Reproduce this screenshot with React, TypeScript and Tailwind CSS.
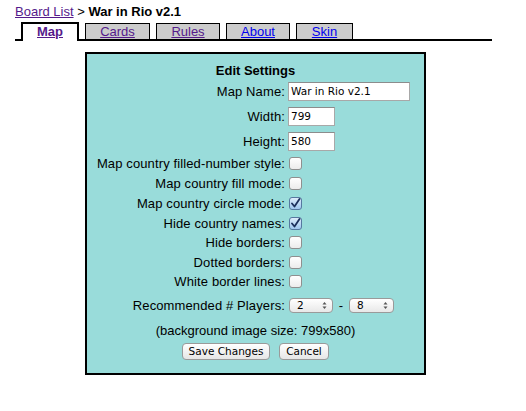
import React from "react";

type CheckRow = { label: string; checked: boolean; h: string };

const checkRows: CheckRow[] = [
  { label: "Map country filled-number style:", checked: false, h: "h-[19px]" },
  { label: "Map country fill mode:", checked: false, h: "h-[20px]" },
  { label: "Map country circle mode:", checked: true, h: "h-[20px]" },
  { label: "Hide country names:", checked: true, h: "h-[20px]" },
  { label: "Hide borders:", checked: false, h: "h-[19px]" },
  { label: "Dotted borders:", checked: false, h: "h-[20px]" },
  { label: "White border lines:", checked: false, h: "h-[19px]" },
];

function Checkbox({ checked }: { checked: boolean }) {
  if (checked) {
    return (
      <span className="ml-[1px] flex h-[13px] w-[13px] items-center justify-center rounded-[3px] border border-[#56789f] bg-gradient-to-b from-[#dcebfa] to-[#9fc6ee]">
        <svg width="11" height="11" viewBox="0 0 11 11">
          <path d="M2 5.5 L4.5 8.5 L9.5 1" fill="none" stroke="#1c2f5c" strokeWidth="1.8" strokeLinecap="round" strokeLinejoin="round" />
        </svg>
      </span>
    );
  }
  return (
    <span className="ml-[1px] block h-[13px] w-[13px] rounded-[3px] border border-[#8f8f8f] bg-gradient-to-b from-white to-[#ececec]" />
  );
}

function Select({ value, w }: { value: string; w: string }) {
  return (
    <span
      className={`flex h-[15px] ${w} items-center justify-between rounded-[4px] border border-[#9a9a9a] bg-gradient-to-b from-white to-[#e8e8e8] pl-[7px] pr-[5px] font-['DejaVu_Sans'] text-[10.5px] leading-none`}
    >
      <span>{value}</span>
      <svg width="5" height="9" viewBox="0 0 5 9">
        <path d="M0.5 3.5 L2.5 1 L4.5 3.5 Z" fill="#555" />
        <path d="M0.5 5.5 L2.5 8 L4.5 5.5 Z" fill="#555" />
      </svg>
    </span>
  );
}

function Button({ children, w }: { children: React.ReactNode; w: string }) {
  return (
    <button
      className={`flex h-[17px] ${w} items-center justify-center rounded-[4px] border border-[#9a9a9a] bg-gradient-to-b from-white to-[#e6e6e6] font-['DejaVu_Sans'] text-[10.5px] leading-none text-black`}
    >
      {children}
    </button>
  );
}

export default function App() {
  const tabs = [
    { label: "Cards", w: "w-[65px]", color: "text-[#551a8b]" },
    { label: "Rules", w: "w-[64px]", color: "text-[#551a8b]" },
    { label: "About", w: "w-[64px]", color: "text-[#0000ee]" },
    { label: "Skin", w: "w-[57px]", color: "text-[#0000ee]" },
  ];

  return (
    <div className="h-[411px] w-[526px] bg-white font-['Liberation_Sans',Arial,sans-serif] text-[13px] leading-[15px] text-black">
      {/* breadcrumb */}
      <div className="pl-[15px] pt-[4px]">
        <a href="#" className="text-[#551a8b] underline">
          Board List
        </a>{" "}
        &gt; <b>War in Rio v2.1</b>
      </div>

      {/* tabs */}
      <div className="ml-[15px] mt-[1px] flex h-[21px] w-[477px] items-end gap-[6px] border-b-2 border-black pl-[6px]">
        <div className="-mb-[2px] flex h-[19px] w-[58px] items-start justify-center border-x-2 border-t-2 border-black bg-white">
          <a href="#" className="font-bold text-[#551a8b] underline">
            Map
          </a>
        </div>
        {tabs.map((t) => (
          <div
            key={t.label}
            className={`flex h-[16px] ${t.w} items-start justify-center border-x border-t border-black bg-[#cccccc]`}
          >
            <a href="#" className={`${t.color} underline`}>
              {t.label}
            </a>
          </div>
        ))}
      </div>

      {/* settings panel */}
      <div className="ml-[85px] mt-[11px] flex h-[323px] w-[341px] flex-col border-2 border-black bg-[#99dcda] pt-[9px]">
        <div className="h-[16px] text-center font-bold">Edit Settings</div>

        <div className="flex h-[25px] items-center gap-[3px]">
          <span className="w-[198px] shrink-0 text-right tracking-[0.12px]">Map Name:</span>
          <span className="flex h-[19px] w-[122px] items-center border border-[#a8a8a8] border-t-[#8c8c8c] bg-white pl-[2px] font-['DejaVu_Sans'] text-[10.5px] leading-none">
            War in Rio v2.1
          </span>
        </div>
        <div className="flex h-[25px] items-center gap-[3px]">
          <span className="w-[198px] shrink-0 text-right tracking-[0.12px]">Width:</span>
          <span className="flex h-[19px] w-[47px] items-center border border-[#a8a8a8] border-t-[#8c8c8c] bg-white pl-[2px] font-['DejaVu_Sans'] text-[10.5px] leading-none">
            799
          </span>
        </div>
        <div className="flex h-[25px] items-center gap-[3px]">
          <span className="w-[198px] shrink-0 text-right tracking-[0.12px]">Height:</span>
          <span className="flex h-[19px] w-[47px] items-center border border-[#a8a8a8] border-t-[#8c8c8c] bg-white pl-[2px] font-['DejaVu_Sans'] text-[10.5px] leading-none">
            580
          </span>
        </div>

        {checkRows.map((r) => (
          <div key={r.label} className={`flex ${r.h} items-center gap-[3px]`}>
            <span className="w-[198px] shrink-0 text-right tracking-[0.12px]">{r.label}</span>
            <Checkbox checked={r.checked} />
          </div>
        ))}

        <div className="flex h-[29px] items-center gap-[3px]">
          <span className="w-[198px] shrink-0 text-right tracking-[0.12px]">Recommended # Players:</span>
          <span className="ml-[1px] flex items-center">
            <Select value="2" w="w-[44px]" />
            <span className="w-[16px] text-center">-</span>
            <Select value="8" w="w-[45px]" />
          </span>
        </div>

        <div className="flex h-[20px] items-center justify-center">(background image size: 799x580)</div>

        <div className="flex h-[23px] items-center justify-center gap-[9px]">
          <Button w="w-[88px]">Save Changes</Button>
          <Button w="w-[50px]">Cancel</Button>
        </div>
      </div>
    </div>
  );
}
